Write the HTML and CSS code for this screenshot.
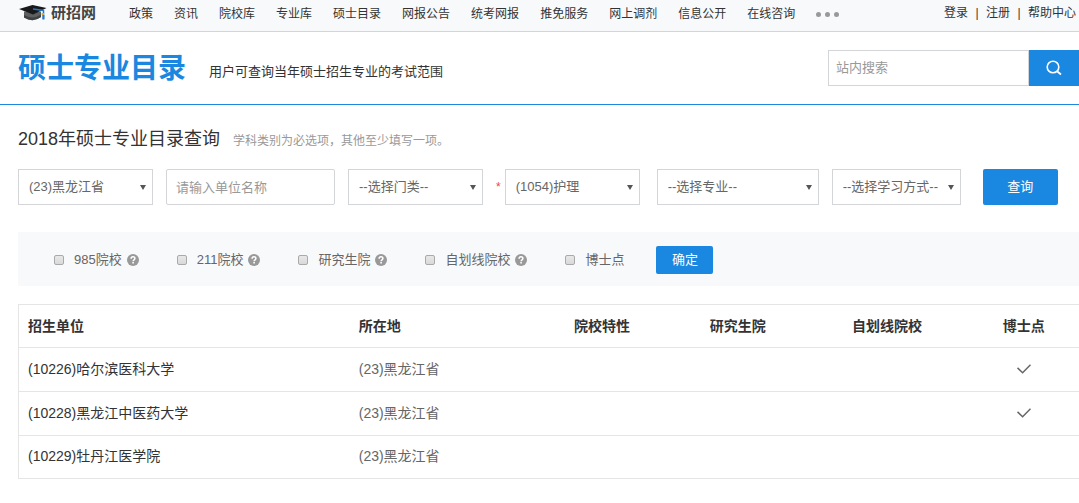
FILE: index.html
```html
<!DOCTYPE html>
<html lang="zh-CN">
<head>
<meta charset="utf-8">
<title>硕士专业目录</title>
<link rel="stylesheet" href="styles.css">
</head>
<body>
<svg class="sprite" aria-hidden="true">
  <symbol id="help" viewBox="0 0 12 12">
    <circle cx="6" cy="6" r="6" fill="#999"/>
    <path d="M4.1 4.7C4.1 2.1 7.9 2.1 7.9 4.5C7.9 5.8 6.1 5.8 6.1 7.2" fill="none" stroke="#fff" stroke-width="1.5"/>
    <rect x="5.3" y="8" width="1.6" height="1.5" fill="#fff"/>
  </symbol>
  <symbol id="check" viewBox="0 0 14 10">
    <path d="M.5 3.9L5.6 8.8L13.5.7" fill="none" stroke="#666" stroke-width="1.5"/>
  </symbol>
</svg>

<header class="topbar">
  <a class="logo" href="#">
    <svg class="logo-cap" viewBox="0 0 28 16" aria-hidden="true">
      <path d="M5 6.5V12.5Q14 18 22 12V6.5Z" fill="#5d5f61"/>
      <path d="M5 10V12.5Q14 18 22 12V9.5Q14 15 5 10Z" fill="#3f4143"/>
      <path d="M0 4L13.5 0L27.5 3L14 9.5Z" fill="#17191b"/>
      <path d="M14 4L24.5 5.4V14" fill="none" stroke="#2277c9" stroke-width="1.5"/>
      <path d="M22.6 8H25V10.2H22.6Z" fill="#d9a92e"/>
      <path d="M23.4 10H25.4V14.5H23.4Z" fill="#2277c9"/>
    </svg>
    <span>研招网</span>
  </a>
  <nav class="nav">
    <a href="#">政策</a>
    <a href="#">资讯</a>
    <a href="#">院校库</a>
    <a href="#">专业库</a>
    <a href="#">硕士目录</a>
    <a href="#">网报公告</a>
    <a href="#">统考网报</a>
    <a href="#">推免服务</a>
    <a href="#">网上调剂</a>
    <a href="#">信息公开</a>
    <a href="#">在线咨询</a>
    <button class="more" type="button" aria-label="更多"><i></i><i></i><i></i></button>
  </nav>
  <div class="account">
    <a href="#">登录</a><span>|</span><a href="#">注册</a><span>|</span><a href="#">帮助中心</a>
  </div>
</header>

<section class="banner">
  <h1>硕士专业目录</h1>
  <p>用户可查询当年硕士招生专业的考试范围</p>
  <form class="search">
    <input type="text" placeholder="站内搜索" aria-label="站内搜索">
    <button type="button" aria-label="搜索">
      <svg viewBox="0 0 16 16" aria-hidden="true">
        <circle cx="7" cy="7" r="5.8" fill="none" stroke="#fff" stroke-width="1.6"/>
        <path d="M10.8 11L15 14.5" stroke="#fff" stroke-width="1.8"/>
      </svg>
    </button>
  </form>
</section>

<main class="content">
  <div class="heading">
    <h2>2018年硕士专业目录查询</h2>
    <p>学科类别为必选项，其他至少填写一项。</p>
  </div>

  <form class="query">
    <span class="select"><select aria-label="省份"><option>(23)黑龙江省</option></select></span>
    <input class="unit" type="text" placeholder="请输入单位名称" aria-label="单位名称">
    <span class="select"><select aria-label="门类"><option>--选择门类--</option></select></span>
    <span class="required">*</span>
    <span class="select category"><select aria-label="学科类别"><option>(1054)护理</option></select></span>
    <span class="select major"><select aria-label="专业"><option>--选择专业--</option></select></span>
    <span class="select mode"><select aria-label="学习方式"><option>--选择学习方式--</option></select></span>
    <button class="btn btn-query" type="button">查询</button>
  </form>

  <form class="filters">
    <label><input type="checkbox">985院校<svg><use href="#help"/></svg></label>
    <label><input type="checkbox">211院校<svg><use href="#help"/></svg></label>
    <label><input type="checkbox">研究生院<svg><use href="#help"/></svg></label>
    <label><input type="checkbox">自划线院校<svg><use href="#help"/></svg></label>
    <label><input type="checkbox">博士点</label>
    <button class="btn btn-ok" type="button">确定</button>
  </form>

  <table class="results">
    <colgroup>
      <col class="c-unit"><col class="c-place"><col class="c-flag"><col class="c-flag"><col class="c-line"><col>
    </colgroup>
    <thead>
      <tr><th>招生单位</th><th>所在地</th><th>院校特性</th><th>研究生院</th><th>自划线院校</th><th>博士点</th></tr>
    </thead>
    <tbody>
      <tr><td><a href="#">(10226)哈尔滨医科大学</a></td><td>(23)黑龙江省</td><td></td><td></td><td></td><td><svg role="img" aria-label="是"><use href="#check"/></svg></td></tr>
      <tr><td><a href="#">(10228)黑龙江中医药大学</a></td><td>(23)黑龙江省</td><td></td><td></td><td></td><td><svg role="img" aria-label="是"><use href="#check"/></svg></td></tr>
      <tr><td><a href="#">(10229)牡丹江医学院</a></td><td>(23)黑龙江省</td><td></td><td></td><td></td><td></td></tr>
    </tbody>
  </table>
</main>
</body>
</html>
```
FILE: styles.css
```css
* {
  box-sizing: border-box;
}

body {
  margin: 0;
  background: #fff;
  color: #333;
  font: 13px/20px "Liberation Sans", "Noto Sans CJK SC", sans-serif;
}

h1, h2, p {
  margin: 0;
}

a {
  color: #333;
  text-decoration: none;
}

input, select, button {
  margin: 0;
  font: inherit;
  border-radius: 0;
}

button {
  padding: 0;
  border: 0;
  cursor: pointer;
}

.sprite {
  display: none;
}

/* Top bar */
.topbar {
  display: flex;
  height: 32px;
  padding: 0 3px 0 19px;
  background: #f8f9fb;
  border-bottom: 1px solid #d3d5d8;
  font-size: 12px;
  white-space: nowrap;
}

.logo {
  display: flex;
  align-items: center;
  gap: 4px;
  height: 26px;
  margin-right: 33px;
  color: #444;
  font-size: 15px;
  font-weight: bold;
}

.logo-cap {
  width: 28px;
  height: 16px;
}

.nav {
  display: flex;
  align-items: center;
  gap: 21px;
  height: 28px;
}

.more {
  display: flex;
  gap: 4px;
  background: none;
}

.more i {
  width: 5px;
  height: 5px;
  border-radius: 50%;
  background: #999;
}

.account {
  display: flex;
  align-items: center;
  height: 26px;
  margin-left: auto;
}

.account span {
  width: 18px;
  text-align: center;
}

/* Banner */
.banner {
  display: flex;
  align-items: center;
  height: 73px;
  padding-left: 18px;
  border-bottom: 1px solid #1a87e0;
}

.banner h1 {
  padding-top: 2px;
  color: #1a87e0;
  font-size: 28px;
  line-height: 40px;
}

.banner p {
  margin-left: 23px;
  padding-top: 8px;
}

.search {
  display: flex;
  width: 251px;
  height: 36px;
  margin-left: auto;
}

.search input {
  flex: 1;
  min-width: 0;
  padding: 0 7px;
  border: 1px solid #d3d5d8;
}

.search button {
  display: grid;
  place-items: center;
  width: 50px;
  background: #1a87e0;
}

.search svg {
  width: 16px;
  height: 16px;
}

::placeholder {
  color: #999;
  opacity: 1;
}

/* Query form */
.content {
  padding: 20px 0 24px 18px;
}

.heading {
  display: flex;
  align-items: baseline;
  gap: 13px;
  line-height: 28px;
}

.heading h2 {
  font-size: 18px;
  font-weight: normal;
}

.heading p {
  color: #999;
  font-size: 12px;
}

.query {
  display: flex;
  align-items: center;
  gap: 13px;
  height: 36px;
  margin-top: 14px;
}

.select {
  position: relative;
  width: 135px;
  height: 36px;
}

.select::after {
  content: "";
  position: absolute;
  top: 16px;
  right: 7px;
  border: 3px solid transparent;
  border-top: 5px solid #555;
  border-bottom: 0;
  pointer-events: none;
}

.select select {
  width: 100%;
  height: 100%;
  padding: 0 0 0 10px;
  border: 1px solid #d3d5d8;
  background: #fff;
  color: #666;
  appearance: none;
}

.unit {
  width: 169px;
  height: 36px;
  padding: 0 9px;
  border: 1px solid #d3d5d8;
}

.unit, .btn {
  border-radius: 2px;
}

.required {
  color: #e74c3c;
  font-size: 12px;
}

.category {
  margin: 0 4px 0 -9px;
}

.major {
  width: 162px;
}

.mode {
  width: 129px;
}

.btn {
  background: #1a87e0;
  color: #fff;
}

.btn-query {
  width: 75px;
  height: 36px;
  margin-left: 9px;
}

/* Filters */
.filters {
  display: flex;
  align-items: center;
  gap: 38px;
  height: 54px;
  margin-top: 27px;
  padding: 2px 0 0 36px;
  background: #f8f9fb;
  color: #666;
}

.filters label {
  display: flex;
  align-items: center;
}

.filters input {
  width: 10px;
  height: 10px;
  margin-right: 10px;
  border: 1px solid #aaa;
  border-radius: 2px;
  background: linear-gradient(#e8e8e8, #d9d9d9);
  appearance: none;
}

.filters input:checked {
  background: #1a87e0;
}

.filters svg {
  width: 12px;
  height: 12px;
  margin-left: 5px;
}

.btn-ok {
  width: 57px;
  height: 28px;
  margin-left: -6px;
}

/* Results */
.results {
  width: 100%;
  margin-top: 18px;
  border: 1px solid #e5e5e5;
  border-right: 0;
  border-bottom: 0;
  border-spacing: 0;
  table-layout: fixed;
  color: #666;
  font-size: 14px;
}

.c-unit {
  width: 31.2%;
}

.c-place {
  width: 17.4%;
}

.c-flag {
  width: 12.8%;
}

.c-line {
  width: 15.4%;
}

.results th,
.results td {
  height: 44px;
  padding: 0 0 2px;
  border-bottom: 1px solid #e5e5e5;
  text-align: center;
}

.results th {
  height: 43px;
  padding: 0;
  color: #333;
}

.results tr:last-child td {
  height: 43px;
}

.results th:nth-child(-n+2),
.results td:nth-child(-n+2) {
  padding-left: 9px;
  text-align: left;
}

.results svg {
  display: block;
  width: 14px;
  height: 10px;
  margin: 0 auto;
}
```
